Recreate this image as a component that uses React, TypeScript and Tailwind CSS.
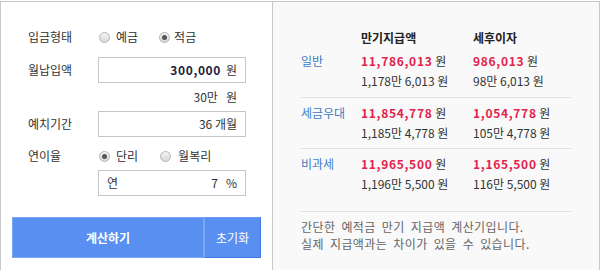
import type { ReactNode } from "react";

const FONT = "font-['Noto_Sans_CJK_KR','Noto_Sans',sans-serif]";

type Row = {
  label: string;
  total: string;
  totalKo: string;
  interest: string;
  interestKo: string;
};

const ROWS: Row[] = [
  {
    label: "일반",
    total: "11,786,013",
    totalKo: "1,178만 6,013 원",
    interest: "986,013",
    interestKo: "98만 6,013 원",
  },
  {
    label: "세금우대",
    total: "11,854,778",
    totalKo: "1,185만 4,778 원",
    interest: "1,054,778",
    interestKo: "105만 4,778 원",
  },
  {
    label: "비과세",
    total: "11,965,500",
    totalKo: "1,196만 5,500 원",
    interest: "1,165,500",
    interestKo: "116만 5,500 원",
  },
];

function Radio({ checked, label, gap }: { checked?: boolean; label: string; gap?: string }) {
  return (
    <span className="inline-flex items-center">
      <span className="flex h-[11px] w-[11px] items-center justify-center rounded-full border border-[#b4b4b4] bg-gradient-to-b from-[#f4f4f4] to-[#d8d8d8]">
        {checked && <span className="h-[5px] w-[5px] rounded-full bg-[#555]" />}
      </span>
      <span className={`${gap ?? "ml-[6px]"} text-[#333]`}>{label}</span>
    </span>
  );
}

function Field({ children, className = "justify-end" }: { children: ReactNode; className?: string }) {
  return (
    <div
      className={`flex h-[26px] w-[148px] items-center border border-[#c6c6c6] bg-white pr-[8px] pl-[8px] text-[#333] ${className}`}
    >
      {children}
    </div>
  );
}

function Label({ children }: { children: ReactNode }) {
  return <div className="w-[70px] shrink-0 text-[#333]">{children}</div>;
}

export default function App() {
  return (
    <div className={`${FONT} text-[12px] leading-none`}>
      <div className="mt-px flex h-[280px] w-[600px] border-x border-t border-[#c8c8c8]">
        {/* input side */}
        <div className="w-[272px] shrink-0 border-r border-[#c8c8c8] bg-white pt-[22px]">
          <div className="ml-[27px] flex h-[26px] items-center">
            <Label>입금형태</Label>
            <div className="flex items-center gap-[21px] pl-[1px]">
              <Radio label="예금" />
              <Radio checked label="적금" gap="ml-[4px]" />
            </div>
          </div>

          <div className="ml-[27px] mt-[7px] flex items-center">
            <Label>월납입액</Label>
            <Field>
              <b className="tracking-[0.6px] text-[#1e1e3c]">300,000</b>
              <span className="ml-[5px]">원</span>
            </Field>
          </div>

          <div className="ml-[97px] flex h-[28px] w-[148px] items-center justify-end pr-[9px] text-[#333]">
            30만&nbsp;&nbsp;&nbsp;원
          </div>

          <div className="ml-[27px] flex items-center">
            <Label>예치기간</Label>
            <Field>36 개월</Field>
          </div>

          <div className="ml-[27px] mt-[6px] flex h-[26px] items-center">
            <Label>연이율</Label>
            <div className="flex items-center gap-[22px] pl-[1px]">
              <Radio checked label="단리" />
              <Radio label="월복리" gap="ml-[7px]" />
            </div>
          </div>

          <div className="ml-[97px] mt-px">
            <Field className="justify-between">
              <span>연</span>
              <span>7&nbsp;&nbsp;&nbsp;%</span>
            </Field>
          </div>

          <div className="ml-[11px] mt-[21px] flex h-[41px] w-[249px]">
            <button
              type="button"
              className="flex flex-1 items-center justify-center border border-[#7aa6f6] bg-[#5a8ff2] font-bold text-white"
            >
              계산하기
            </button>
            <button
              type="button"
              className="flex w-[57px] items-center justify-center border border-l-[#7aa6f6] border-t-[#6a9af4] border-r-[#3f78e2] border-b-[#3f78e2] bg-[#5a8ff2] text-white"
            >
              초기화
            </button>
          </div>
        </div>

        {/* result side */}
        <div className="flex-1 bg-[#f9f9f9] pr-[28px] pl-[28px] pt-[26px]">
          <div className="flex h-[20px] items-center font-bold text-[#222]">
            <div className="w-[60px]" />
            <div className="w-[112px]">만기지급액</div>
            <div>세후이자</div>
          </div>

          {ROWS.map((r, i) => (
            <div
              key={r.label}
              className={`border-b border-[#e3e3e3] ${i === 0 ? "pt-[3px] pb-[6px]" : i === 1 ? "pt-[5px] pb-[5px]" : "pt-[5px] pb-[17px]"}`}
            >
              <div className="flex h-[20px] items-center">
                <div className="w-[60px] text-[#3d7cc4]">{r.label}</div>
                <div className="w-[112px] text-[#333]">
                  <b className="tracking-[0.7px] text-[#e3224b]">{r.total}</b> 원
                </div>
                <div className="text-[#333]">
                  <b className="tracking-[0.7px] text-[#e3224b]">{r.interest}</b> 원
                </div>
              </div>
              <div className="flex h-[20px] items-center text-[#333]">
                <div className="w-[60px]" />
                <div className="w-[112px]">{r.totalKo}</div>
                <div>{r.interestKo}</div>
              </div>
            </div>
          ))}

          <div className="pt-[6px] leading-[17px] tracking-[0.4px] text-[#666] [word-spacing:3px]">
            <p>간단한 예적금 만기 지급액 계산기입니다.</p>
            <p>실제 지급액과는 차이가 있을 수 있습니다.</p>
          </div>
        </div>
      </div>
    </div>
  );
}
